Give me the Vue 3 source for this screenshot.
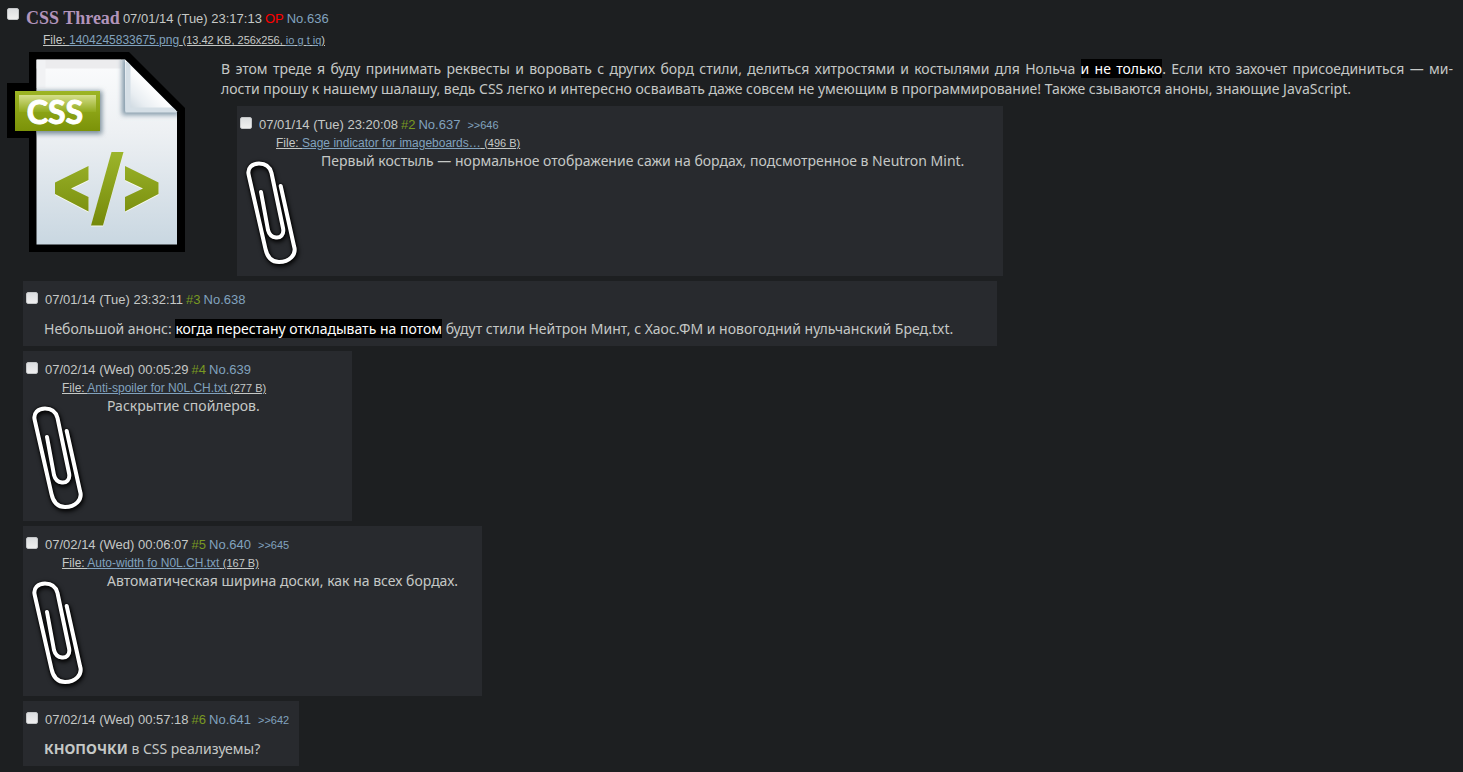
<script setup>
const opening = {
  id: 636,
  title: 'CSS Thread',
  date: '07/01/14 (Tue) 23:17:13',
  file: { name: '1404245833675.png', meta: '(13.42 KB, 256x256, ' },
}

const nested = [
  {
    id: 637,
    index: 2,
    date: '07/01/14 (Tue) 23:20:08',
    backlink: 646,
    file: { name: 'Sage indicator for imageboards…', size: '(496 B)' },
    body: [{ text: 'Первый костыль — нормальное отображение сажи на бордах, подсмотренное в Neutron Mint.' }],
    minWidth: 766,
  },
]

const replies = [
  {
    id: 638,
    index: 3,
    date: '07/01/14 (Tue) 23:32:11',
    body: [
      { text: 'Небольшой анонс: ' },
      { text: 'когда перестану откладывать на потом', kind: 'spoiler' },
      { text: ' будут стили Нейтрон Минт, с Хаос.ФМ и новогодний нульчанский Бред.txt.' },
    ],
    minWidth: 974,
  },
  {
    id: 639,
    index: 4,
    date: '07/02/14 (Wed) 00:05:29',
    file: { name: 'Anti-spoiler for N0L.CH.txt', size: '(277 B)' },
    body: [{ text: 'Раскрытие спойлеров.' }],
    minWidth: 329,
  },
  {
    id: 640,
    index: 5,
    date: '07/02/14 (Wed) 00:06:07',
    backlink: 645,
    file: { name: 'Auto-width fo N0L.CH.txt', size: '(167 B)' },
    body: [{ text: 'Автоматическая ширина доски, как на всех бордах.' }],
    minWidth: 459,
  },
  {
    id: 641,
    index: 6,
    date: '07/02/14 (Wed) 00:57:18',
    backlink: 642,
    body: [{ text: 'КНОПОЧКИ', kind: 'strong' }, { text: ' в CSS реализуемы?' }],
    minWidth: 276,
  },
]
</script>

<template>
  <main class="thread">
    <header class="head op-head">
      <input :id="'post-' + opening.id" type="checkbox" class="tick" />
      <h1 class="title">{{ opening.title }}</h1>
      <label :for="'post-' + opening.id">{{ opening.date }}</label>
      <span class="op-mark">OP</span>
      <a href="#636">No.{{ opening.id }}</a>
    </header>
    <p class="file op-file">
      <span class="under">File: <a href="#file">{{ opening.file.name }}</a>&#32;<small>{{ opening.file.meta }}<a href="#io">io</a> <a href="#g">g</a> <a href="#t">t</a> <a href="#iq">iq</a>)</small></span>
    </p>

    <div class="board">
      <svg class="doc" viewBox="7 52 178 200" role="img" aria-label="CSS">
        <defs>
          <linearGradient id="paper" x1="0" y1="0" x2="0" y2="1">
            <stop offset="0" stop-color="#fbfcfd" />
            <stop offset=".4" stop-color="#edf0f3" />
            <stop offset="1" stop-color="#c9d7e1" />
          </linearGradient>
          <linearGradient id="fold" x1="0" y1="1" x2="1" y2="0">
            <stop offset="0" stop-color="#c3d0d9" />
            <stop offset=".25" stop-color="#e9eef2" />
            <stop offset=".5" stop-color="#ffffff" />
          </linearGradient>
          <linearGradient id="badge" x1="0" y1="0" x2="0" y2="1">
            <stop offset="0" stop-color="#9db524" />
            <stop offset="1" stop-color="#7b9208" />
          </linearGradient>
          <linearGradient id="gloss" x1="0" y1="0" x2="0" y2="1">
            <stop offset="0" stop-color="#d5df8c" />
            <stop offset="1" stop-color="#91aa1c" />
          </linearGradient>
          <linearGradient id="code" gradientUnits="userSpaceOnUse" x1="0" y1="152" x2="0" y2="226">
            <stop offset="0" stop-color="#9cb52b" />
            <stop offset="1" stop-color="#75890a" />
          </linearGradient>
          <filter id="soft" x="-20%" y="-20%" width="140%" height="140%">
            <feGaussianBlur stdDeviation="2.5" />
          </filter>
          <clipPath id="sheet"><path d="M36.500 59.500H125L177 111.500V244.500H36.500z" /></clipPath>
        </defs>
        <path d="M29 52H129L185 108V252H29V138H7V83H29z" fill="#000" />
        <path d="M36.500 59.500H125L177 111.500V244.500H36.500z" fill="url(#paper)" />
        <g clip-path="url(#sheet)">
          <path d="M36.500 64H121" stroke="#ececee" stroke-width="9" />
          <path d="M41 60V88" stroke="#f1f2f4" stroke-width="9" />
          <path d="M122 57V115H182L125 57z" fill="#8299a8" filter="url(#soft)" />
          <rect x="20" y="91" width="82" height="43" fill="#788c99" filter="url(#soft)" />
          <path d="M125 59.500L177 111.500H125z" fill="url(#fold)" />
          <path d="M128 62V110H176" fill="none" stroke="#d5dfe6" stroke-width="5" />
        </g>
        <rect x="15" y="91" width="85" height="40" fill="url(#badge)" />
        <rect x="19" y="95" width="77" height="17" fill="url(#gloss)" />
        <text x="55" y="124" text-anchor="middle" class="doc-text">CSS</text>
        <g fill="#f8faee" transform="translate(0 1)">
          <path d="M55 182.500L88.500 166V180L71 188.500L88.500 197V211.500L55 194z" />
          <path d="M125 166L158.500 182.500V194L125 211.500V197L143 188.500L125 180z" />
          <path d="M111.500 152H123.500L103 225.500H91z" />
        </g>
        <g fill="url(#code)">
          <path d="M55 182.500L88.500 166V180L71 188.500L88.500 197V211.500L55 194z" />
          <path d="M125 166L158.500 182.500V194L125 211.500V197L143 188.500L125 180z" />
          <path d="M111.500 152H123.500L103 225.500H91z" />
        </g>
      </svg>

      <div class="column">
        <p class="body lead">В этом треде я буду принимать реквесты и воровать с других борд стили, делиться хитростями и костылями для Нольча <span class="spoiler">и не только</span>. Если кто захочет присоединиться — ми&shy;<span class="keep">лости прошу</span> к нашему шалашу, ведь CSS легко и интересно осваивать даже совсем не умеющим в программирование! Также сзываются аноны, знающие JavaScript.</p>
        <div class="replies">
          <article v-for="p in nested" :key="p.id" class="reply" :style="{ minWidth: p.minWidth + 'px' }">
            <header class="head">
              <input :id="'post-' + p.id" type="checkbox" class="tick" />
              <label :for="'post-' + p.id">{{ p.date }}</label>
              <span class="index">#{{ p.index }}</span>
              <a :href="'#' + p.id">No.{{ p.id }}</a>
              <a :href="'#' + p.backlink" class="back">&gt;&gt;{{ p.backlink }}</a>
            </header>
            <p class="file"><span class="under">File: <a href="#file">{{ p.file.name }}</a> <small>{{ p.file.size }}</small></span></p>
            <div class="content">
              <svg class="clip" viewBox="0 0 64 116" aria-hidden="true">
                <path d="M40.700 31L54 91C57 100 49 107 39 107C31 107 27 101 25.500 94L8.700 20C7 13 12 8.500 19 8.500C26 8.500 30 12 31.500 18L43 73C44.500 80 40 83 36 82.500C31 82 29 79 28 75L21 37" />
              </svg>
              <p class="body">{{ p.body[0].text }}</p>
            </div>
          </article>
        </div>
      </div>
    </div>

    <section class="replies">
      <article v-for="p in replies" :key="p.id" class="reply" :style="{ minWidth: p.minWidth + 'px' }">
        <header class="head">
          <input :id="'post-' + p.id" type="checkbox" class="tick" />
          <label :for="'post-' + p.id">{{ p.date }}</label>
          <span class="index">#{{ p.index }}</span>
          <a :href="'#' + p.id">No.{{ p.id }}</a>
          <a v-if="p.backlink" :href="'#' + p.backlink" class="back">&gt;&gt;{{ p.backlink }}</a>
        </header>
        <p v-if="p.file" class="file"><span class="under">File: <a href="#file">{{ p.file.name }}</a> <small>{{ p.file.size }}</small></span></p>
        <div class="content" :class="{ plain: !p.file }">
          <svg v-if="p.file" class="clip" viewBox="0 0 64 116" aria-hidden="true">
            <path d="M40.700 31L54 91C57 100 49 107 39 107C31 107 27 101 25.500 94L8.700 20C7 13 12 8.500 19 8.500C26 8.500 30 12 31.500 18L43 73C44.500 80 40 83 36 82.500C31 82 29 79 28 75L21 37" />
          </svg>
          <p class="body"><span v-for="(part, i) in p.body" :key="i" :class="part.kind">{{ part.text }}</span></p>
        </div>
      </article>
    </section>
  </main>
</template>

<style>
body {
  margin: 0;
  background: #1d1f21;
}
</style>

<style scoped>
.thread {
  padding: 10px 10px 6px 7px;
  color: #c5c8c6;
  font: 13px/18px "Liberation Sans", Arial, sans-serif;
}
p,
h1 {
  margin: 0;
}
a {
  color: #81a2be;
  text-decoration: none;
}
.head {
  display: flex;
  align-items: center;
  gap: 3px;
  height: 18px;
  margin-right: -7px;
  white-space: nowrap;
}
.tick {
  appearance: none;
  width: 12px;
  height: 12px;
  margin: 0 4px 4px 0;
  border: 1px solid #c4c6c8;
  border-radius: 2px;
  background: linear-gradient(#dcdee0, #efefef);
}
.op-head .tick {
  margin-bottom: 10px;
}
.title {
  margin-bottom: 2px;
  color: #b294bb;
  font: bold 18px/18px "Liberation Serif", "Times New Roman", serif;
}
.op-mark {
  color: #f00;
}
.index {
  color: #789922;
}
.back {
  margin-left: 4px;
  font-size: 11px;
}
.file {
  padding-left: 36px;
  font-size: 12px;
  line-height: 18px;
  white-space: nowrap;
}
.op-file {
  padding-top: 3px;
}
.under,
.file a {
  text-decoration: underline;
}
.file small {
  font-size: 11px;
}
.board {
  display: flex;
  align-items: flex-start;
  gap: 36px;
  padding-top: 3px;
}
.doc {
  flex: none;
  width: 178px;
  height: 200px;
}
.doc-text {
  fill: #fff;
  stroke: #fff;
  stroke-width: 1px;
  font: bold 32px Lato, sans-serif;
}
.column {
  flex: 1;
  min-width: 0;
  padding-top: 7px;
}
.body {
  font: 14px/20px "Noto Sans", "Open Sans", sans-serif;
}
.lead {
  text-align: justify;
}
.keep {
  white-space: nowrap;
}
.replies {
  display: flex;
  flex-direction: column;
  align-items: flex-start;
  gap: 5px;
  padding: 5px 0 0 16px;
}
.column .replies {
  padding-top: 7px;
}
.reply {
  box-sizing: border-box;
  padding: 10px 16px 6px 3px;
  background: #282a2e;
}
.content {
  display: flex;
  align-items: flex-start;
  gap: 17px;
  margin-top: -1px;
}
.plain {
  margin: 0;
  padding: 10px 0 1px 18px;
}
.clip {
  flex: none;
  width: 64px;
  height: 116px;
  margin: 4px 0 -1px;
  overflow: visible;
  fill: none;
  stroke: #fff;
  stroke-width: 4;
  stroke-linecap: round;
  stroke-linejoin: round;
  filter: drop-shadow(0 0 1px #000) drop-shadow(1px 2px 2px #000);
}
.spoiler {
  background: #000;
  color: #fff;
}
.strong {
  font-weight: bold;
}
</style>
